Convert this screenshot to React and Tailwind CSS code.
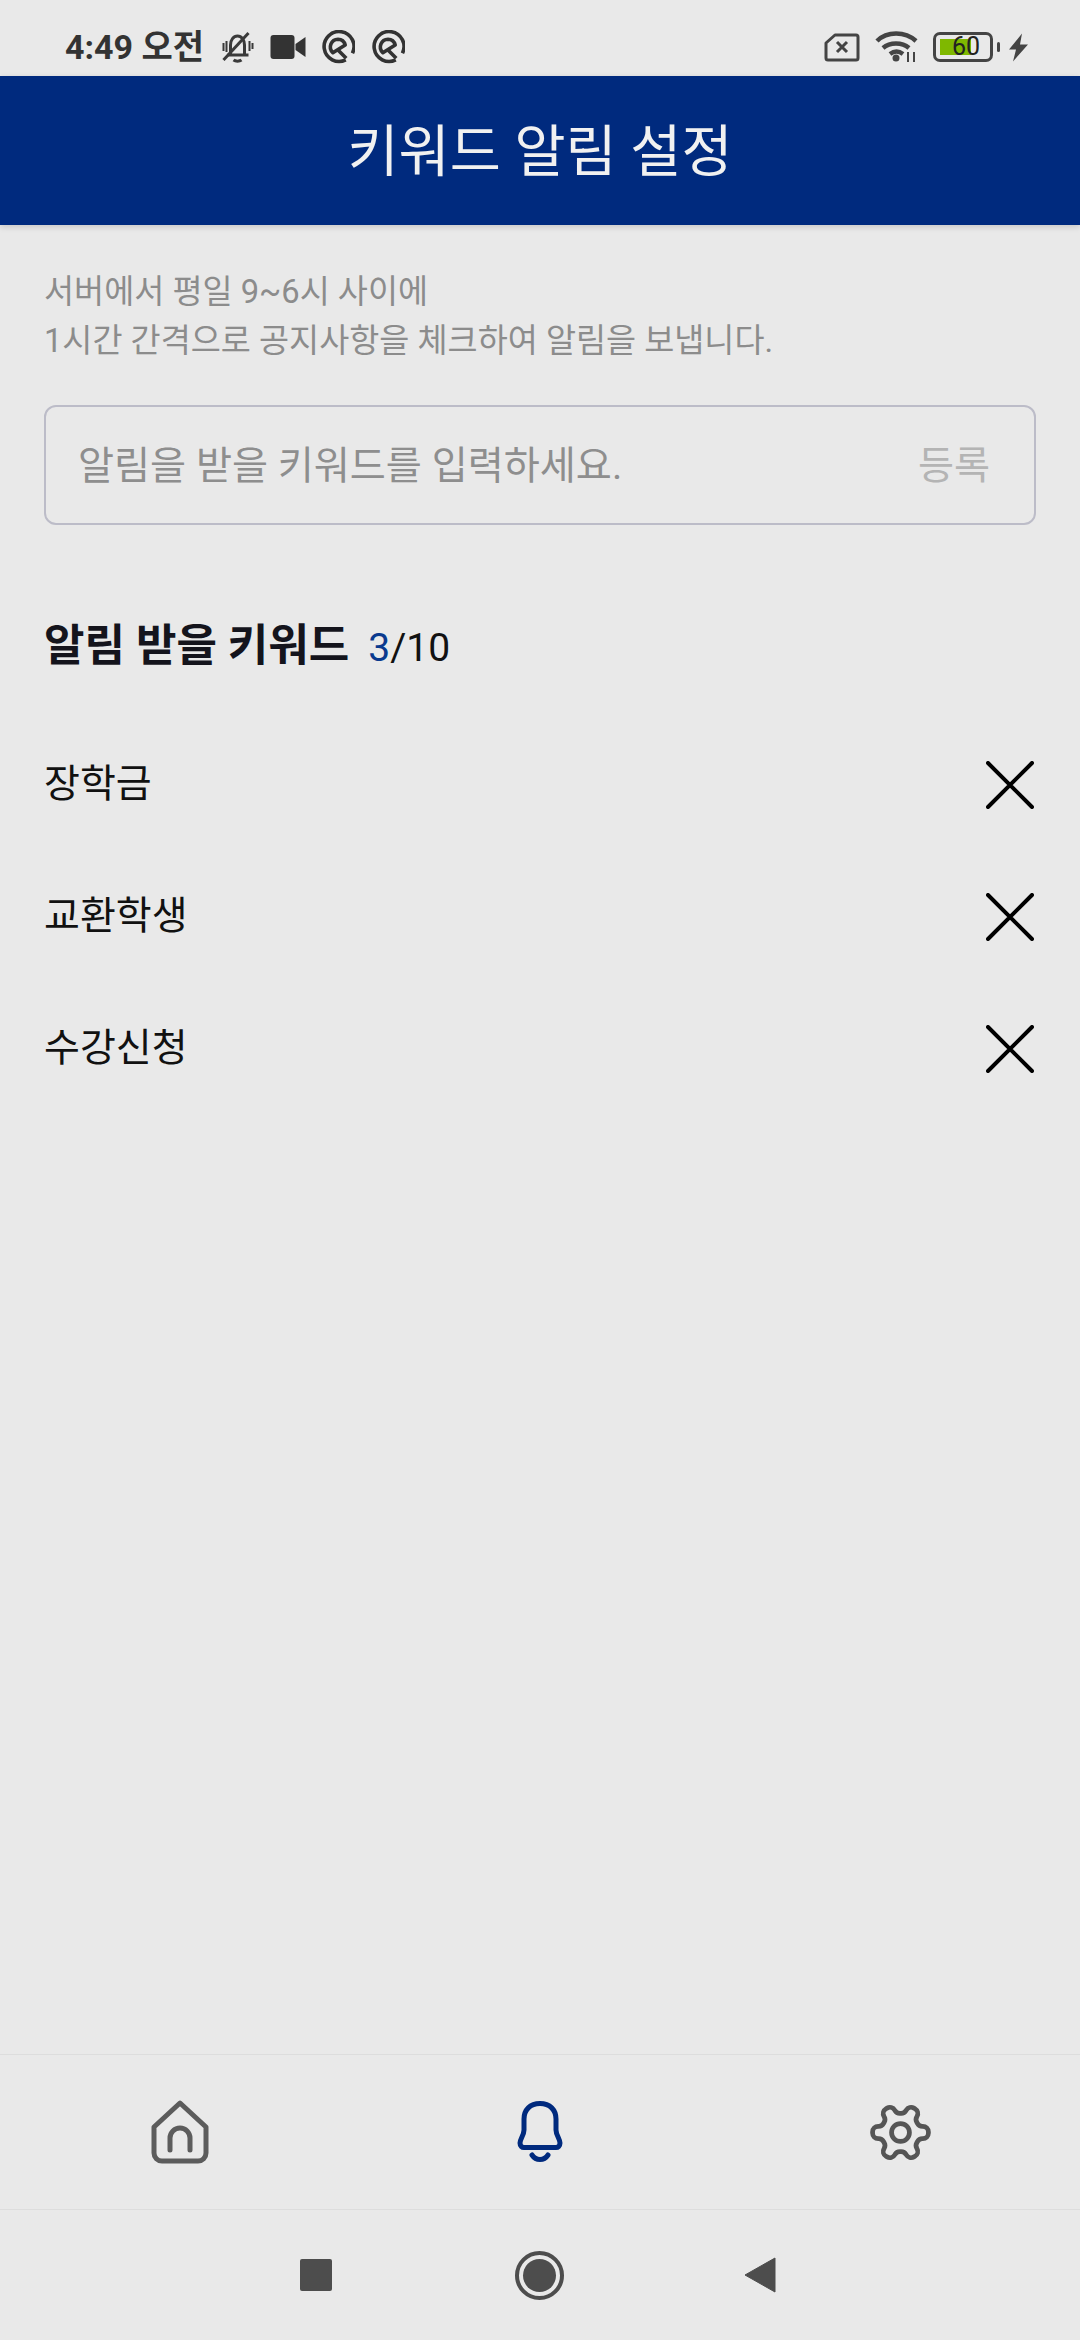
import React from 'react';

const keywords = ['장학금', '교환학생', '수강신청'];

const QIcon = ({ className }) => (
  <svg className={className} width="34" height="34" viewBox="0 0 33 33" fill="none" stroke="#333333" strokeWidth="3.500">
    <path d="M24 29a14.500 14.500 0 1 1 6.500-6.500" />
    <path d="M16.500 9a7.500 7.500 0 0 1 7 5.500L11.500 22a7.500 7.500 0 0 1 5-13z" strokeLinejoin="round" />
    <path d="m15.500 18.500 9 9" />
  </svg>
);

const StatusBar = () => (
  <div className="h-[76px] shrink-0 flex items-center justify-between pt-[18px] pl-[65px] pr-[52px] text-[#333333]">
    <div className="flex items-center">
      <span className="text-[34px] font-bold leading-none w-[155px] whitespace-nowrap">4:49 오전</span>
      <svg width="35" height="32" viewBox="0 0 34 32" fill="none" stroke="#3a3a3a" strokeWidth="3">
        <path d="M10 23V14c0-5 3-9 7-9s7 4 7 9v9" />
        <path d="M7 24h21" />
        <path d="M13 29c2 1.500 6 1.500 8 0" strokeWidth="3" />
        <path d="M3 29 28 2" />
        <path d="M3 12v8M6 10v11M29 10v10M32 12v6" strokeWidth="2" />
      </svg>
      <svg className="ml-[15px]" width="36" height="24" viewBox="0 0 35 24" fill="#333333">
        <rect x="0" y="0" width="24" height="24" rx="3" />
        <path d="M25 9 35 2v20L25 15z" />
      </svg>
      <QIcon className="ml-[15px]" />
      <QIcon className="ml-[16px]" />
    </div>
    <div className="flex items-center">
      <svg width="36" height="29" viewBox="0 0 36 29" fill="none" stroke="#444444" strokeWidth="3">
        <path d="M11 2h21a2 2 0 0 1 2 2v21a2 2 0 0 1-2 2H4a2 2 0 0 1-2-2V10z" strokeLinejoin="round" />
        <path d="m13 9 10 10M23 9 13 19" />
      </svg>
      <svg className="ml-[15px]" width="44" height="32" viewBox="0 0 44 32" fill="none" stroke="#444444" strokeWidth="4.500">
        <path d="M2 10C12 0 30 0 41 10" />
        <path d="M8 17c7-6 19-6 26 0" />
        <path d="M15 23c4-3 9-3 13 0" />
        <circle cx="21" cy="27" r="3.500" fill="#444444" stroke="none" />
        <path d="M33 21v10M39 21v10" strokeWidth="2" />
      </svg>
      <div className="ml-[14px] relative w-[60px] h-[30px] border-[3px] border-[#444444] rounded-[7px]">
        <div className="absolute left-[4px] top-[4px] bottom-[4px] w-[31px] bg-[#7fb800]"></div>
        <span className="absolute left-[16px] top-0 text-[25px] leading-[24px] text-[#222222] font-['Roboto',sans-serif]">60</span>
      </div>
      <div className="ml-[4px] w-[3px] h-[10px] bg-[#444444] rounded-sm"></div>
      <svg className="ml-[9px]" width="19" height="29" viewBox="0 0 19 28" fill="#444444">
        <path d="M13 0 0 16h7L4 28 19 11h-8z" />
      </svg>
    </div>
  </div>
);

const App = () => {
  return (
    <div className="w-[1080px] h-[2340px] flex flex-col bg-[#e9e9e9] font-['Roboto','Noto_Sans_CJK_KR',sans-serif]">
      <StatusBar />

      <header className="h-[149px] shrink-0 flex items-center justify-center pt-[5px] bg-[#002a7e] shadow-[0_2px_6px_rgba(0,0,0,0.15)]">
        <h1 className="text-[55.500px] font-normal text-[#f1f1f1] leading-none">키워드 알림 설정</h1>
      </header>

      <main className="flex-1 px-[44px]">
        <p className="mt-[43px] text-[32.700px] leading-[49px] text-[#8c8c8c]">
          서버에서 평일 9~6시 사이에
          <br />
          1시간 간격으로 공지사항을 체크하여 알림을 보냅니다.
        </p>

        <div className="mt-[39px] h-[120px] flex items-center justify-between pt-[2px] pl-[32px] pr-[44px] border-2 border-[#bcbcc8] rounded-[12px]">
          <span className="text-[39.200px] text-[#8e8e8e]">알림을 받을 키워드를 입력하세요.</span>
          <span className="text-[39.200px] text-[#b4b4b4]">등록</span>
        </div>

        <div className="mt-[91px] flex items-baseline">
          <h2 className="text-[44px] font-bold leading-[60px] text-[#14141c]">알림 받을 키워드</h2>
          <span className="ml-[19px] text-[39px] text-[#111111]">
            <span className="text-[#0a3a8e]">3</span>/10
          </span>
        </div>

        <ul className="mt-[41px]">
          {keywords.map((keyword) => (
            <li key={keyword} className="h-[132px] flex items-center justify-between">
              <span className="text-[39px] text-[#111111]">{keyword}</span>
              <svg className="mr-[2px]" width="48" height="48" viewBox="0 0 48 48" stroke="#000000" strokeWidth="4" strokeLinecap="round">
                <path d="M2 2l44 44M46 2 2 46" />
              </svg>
            </li>
          ))}
        </ul>
      </main>

      <nav className="h-[156px] shrink-0 grid grid-cols-3 border-t border-b border-[#dddddd] items-center justify-items-center">
        <svg width="58" height="64" viewBox="0 0 58 64" fill="none" stroke="#5c5c5c" strokeWidth="5" strokeLinecap="round" strokeLinejoin="round">
          <path d="M29 3 3 27v26a8 8 0 0 0 8 8h36a8 8 0 0 0 8-8V27z" />
          <path d="M19 50V38a10 10 0 0 1 20 0v12" />
        </svg>
        <svg width="46" height="62" viewBox="0 0 46 62" fill="none" stroke="#002a7e" strokeWidth="5" strokeLinecap="round" strokeLinejoin="round">
          <path d="M23 2.500C13 2.500 7 9 7 18v11c0 5-4 9-4 13 0 3 2 4.500 4 4.500h32c2 0 4-1.500 4-4.500 0-4-4-8-4-13V18C39 9 33 2.500 23 2.500z" />
          <path d="M15 54c4 6 12 6 16 0" />
        </svg>
        <svg width="67" height="67" viewBox="0 0 24 24" fill="none" stroke="#555555" strokeWidth="1.700" strokeLinecap="round" strokeLinejoin="round">
          <g transform="rotate(90 12 12)">
            <path d="M12.220 2h-.440a2 2 0 0 0-2 2v.180a2 2 0 0 1-1 1.730l-.430.250a2 2 0 0 1-2 0l-.150-.080a2 2 0 0 0-2.730.730l-.220.380a2 2 0 0 0 .730 2.730l.150.100a2 2 0 0 1 1 1.720v.510a2 2 0 0 1-1 1.740l-.150.090a2 2 0 0 0-.730 2.730l.220.380a2 2 0 0 0 2.730.730l.150-.080a2 2 0 0 1 2 0l.430.250a2 2 0 0 1 1 1.730V20a2 2 0 0 0 2 2h.440a2 2 0 0 0 2-2v-.180a2 2 0 0 1 1-1.730l.430-.250a2 2 0 0 1 2 0l.150.080a2 2 0 0 0 2.730-.730l.220-.390a2 2 0 0 0-.730-2.730l-.150-.080a2 2 0 0 1-1-1.740v-.500a2 2 0 0 1 1-1.740l.150-.090a2 2 0 0 0 .730-2.730l-.220-.380a2 2 0 0 0-2.730-.730l-.150.080a2 2 0 0 1-2 0l-.430-.250a2 2 0 0 1-1-1.730V4a2 2 0 0 0-2-2z" />
            <circle cx="12" cy="12" r="3.200" />
          </g>
        </svg>
      </nav>

      <div className="h-[130px] shrink-0 flex items-center pl-[300px]">
        <div className="w-[32px] h-[32px] bg-[#4d4d4d] rounded-[2px]"></div>
        <div className="ml-[183px] w-[49px] h-[49px] rounded-full border-[4px] border-[#4d4d4d] flex items-center justify-center">
          <div className="w-[33px] h-[33px] rounded-full bg-[#4d4d4d]"></div>
        </div>
        <svg className="ml-[180px]" width="32" height="36" viewBox="0 0 32 36" fill="#4d4d4d">
          <path d="M31 1v34L1 18z" stroke="#4d4d4d" strokeLinejoin="round" strokeWidth="1" />
        </svg>
      </div>
    </div>
  );
};

export default App;
